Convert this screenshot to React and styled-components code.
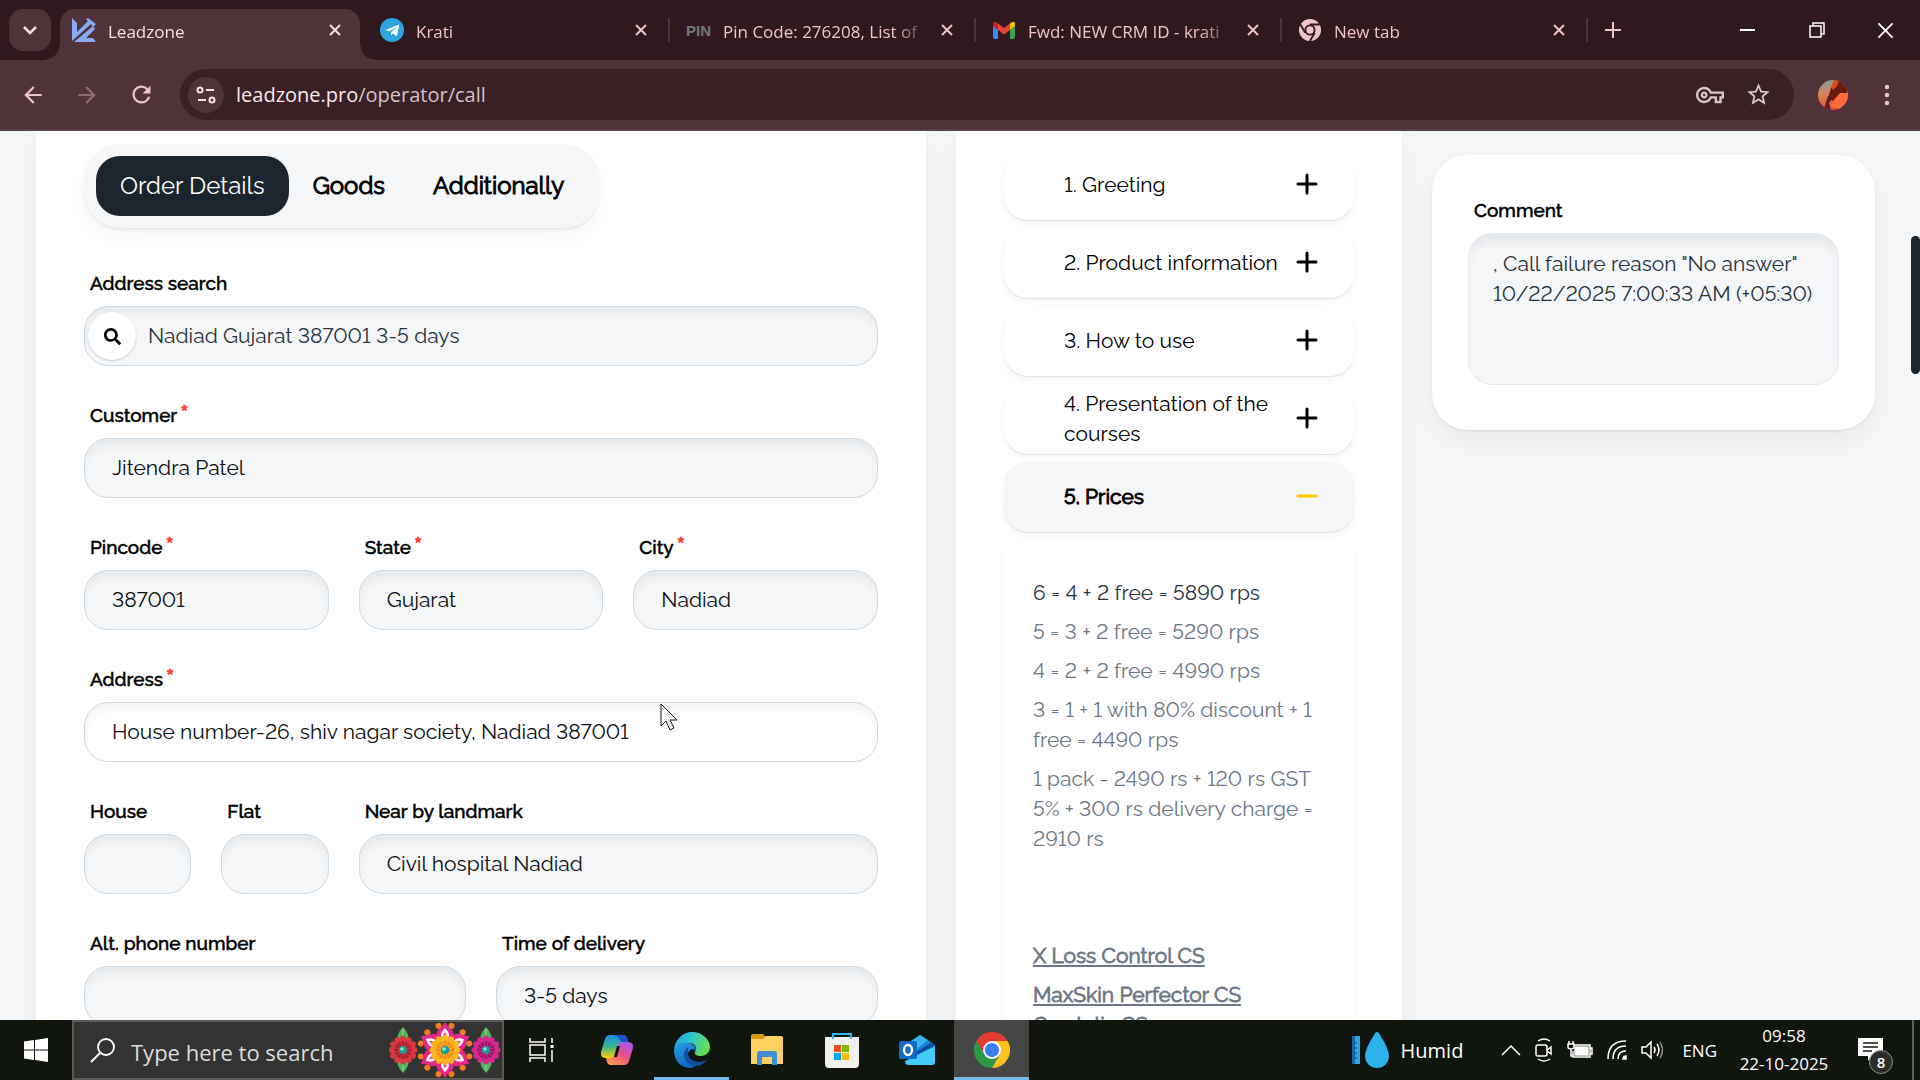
import React from "react";
import styled, { createGlobalStyle } from "styled-components";
import { FaSearch, FaTelegramPlane } from "react-icons/fa";
import {
  MdArrowBack,
  MdArrowForward,
  MdRefresh,
  MdStarBorder,
  MdOutlineVpnKey,
} from "react-icons/md";

const tabs = [
  { title: "Leadzone", icon: "leadzone", active: true },
  { title: "Krati", icon: "telegram" },
  { title: "Pin Code: 276208, List of", icon: "pin" },
  { title: "Fwd: NEW CRM ID - krati", icon: "gmail" },
  { title: "New tab", icon: "chrome" },
];

const fields = [
  { id: "search", label: "Address search", value: "Nadiad Gujarat 387001 3-5 days", span: 12, search: true },
  { id: "customer", label: "Customer", value: "Jitendra Patel", span: 12, required: true },
  { id: "pincode", label: "Pincode", value: "387001", span: 4, required: true },
  { id: "state", label: "State", value: "Gujarat", span: 4, required: true },
  { id: "city", label: "City", value: "Nadiad", span: 4, required: true },
  { id: "address", label: "Address", value: "House number-26, shiv nagar society, Nadiad 387001", span: 12, required: true, focused: true },
  { id: "house", label: "House", value: "", span: 2 },
  { id: "flat", label: "Flat", value: "", span: 2 },
  { id: "landmark", label: "Near by landmark", value: "Civil hospital Nadiad", span: 8 },
  { id: "phone", label: "Alt. phone number", value: "", span: 6 },
  { id: "delivery", label: "Time of delivery", value: "3-5 days", span: 6 },
];

const script = [
  { title: "1. Greeting" },
  { title: "2. Product information" },
  { title: "3. How to use" },
  { title: "4. Presentation of the courses" },
  { title: "5. Prices", open: true },
];

const prices = [
  "5 = 3 + 2 free = 5290 rps",
  "4 = 2 + 2 free = 4990 rps",
  "3 = 1 + 1 with 80% discount + 1 free = 4490 rps",
  "1 pack - 2490 rs + 120 rs GST 5% + 300 rs delivery charge = 2910 rs",
];

/* ---------- icons ---------- */

const ChromeLogo = ({ size, mono }) => {
  const [red, green, yellow, blue, ring] = mono
    ? ["#efc3ca", "#efc3ca", "#efc3ca", "#efc3ca", "#30191e"]
    : ["#e33b2e", "#2b9a47", "#fcc31e", "#3b7ded", "#ffffff"];
  return (
    <svg width={size} height={size} viewBox="0 0 48 48" aria-hidden="true">
      <path d="M24 12h20.800A24 24 0 0 0 3.200 12L13.600 30Z" fill={red} />
      <path d="M34.400 30 24 48A24 24 0 0 1 3.200 12L13.600 30Z" fill={green} />
      <path d="M24 12h20.800A24 24 0 0 1 24 48L34.400 30Z" fill={yellow} />
      {mono && (
        <path d="M24 12h21M13.600 30 3 12M34.400 30 24 48" stroke={ring} strokeWidth="4" />
      )}
      <circle cx="24" cy="24" r="12" fill={ring} />
      <circle cx="24" cy="24" r={mono ? 8 : 9.500} fill={blue} />
    </svg>
  );
};

const LeadzoneLogo = () => (
  <svg width="24" height="24" viewBox="0 0 24 24" fill="#86abfb" aria-hidden="true">
    <path d="M0 0 5 5v9L16 3l-2-2 2-1 8 6-3 3-2-3L0 23Z" />
    <path d="M2 24 21 8l2 3-9 9h7l3 4Z" />
  </svg>
);

const GmailLogo = () => (
  <svg width="24" height="24" viewBox="0 0 24 24" aria-hidden="true">
    <path d="M1 7v12a2 2 0 0 0 2 2h3V10Z" fill="#4285f4" />
    <path d="M23 7v12a2 2 0 0 1-2 2h-3V10Z" fill="#34a853" />
    <path d="M18 5.500 20 4a2 2 0 0 1 3 2v2l-5 4Z" fill="#fbbc04" />
    <path d="M6 5.500 4 4a2 2 0 0 0-3 2v2l5 4Z" fill="#c5221f" />
    <path d="M6 5.500 12 10l6-4.500V12l-6 4.500L6 12Z" fill="#ea4335" />
  </svg>
);

const TabIcon = ({ name }) => {
  if (name === "leadzone") return <LeadzoneLogo />;
  if (name === "telegram")
    return (
      <TelegramBadge>
        <FaTelegramPlane size={15} />
      </TelegramBadge>
    );
  if (name === "pin") return <PinBadge>PIN</PinBadge>;
  if (name === "gmail") return <GmailLogo />;
  return <ChromeLogo size={22} mono />;
};

const CloseIcon = ({ size = 12, width = 2 }) => (
  <svg width={size} height={size} viewBox="0 0 12 12" fill="none" stroke="currentColor" strokeWidth={width}>
    <path d="M1 1l10 10M11 1 1 11" />
  </svg>
);

const SiteIcon = () => (
  <svg width="20" height="20" viewBox="0 0 20 20" fill="none" stroke="currentColor" strokeWidth="2">
    <circle cx="4" cy="5" r="2.500" />
    <path d="M10 5h8M2 15h8" />
    <circle cx="16" cy="15" r="2.500" />
  </svg>
);

const Avatar = () => (
  <svg width="30" height="30" viewBox="0 0 30 30" aria-hidden="true">
    <defs>
      <clipPath id="avatar">
        <circle cx="15" cy="15" r="15" />
      </clipPath>
      <linearGradient id="sunset" x1="0" y1="0" x2="0" y2="1">
        <stop offset="0" stopColor="#8d9a94" />
        <stop offset="0.500" stopColor="#d98556" />
        <stop offset="1" stopColor="#f0452a" />
      </linearGradient>
    </defs>
    <g clipPath="url(#avatar)">
      <rect width="30" height="30" fill="url(#sunset)" />
      <path d="m17 13 11-1 2 8-8 9-9-2Z" fill="#ff6a3a" />
      <path d="M13 8 18 0h6l6 9-1 4-7 0-7 8-5-3Z" fill="#6b1c10" />
      <path d="M13 7 16 0h5l-2 6-4 4Z" fill="#e2491c" />
      <path d="m10 16 5 2-4 5 2 7H6l2-8Z" fill="#54202a" />
    </g>
  </svg>
);

const Cursor = () => (
  <svg width="18" height="28" viewBox="0 0 18 28" aria-hidden="true">
    <path d="M1 1v22l5-5 4 9 4-2-4-8h7Z" fill="#fff" stroke="#111" strokeWidth="1" />
  </svg>
);

const WindowsLogo = () => (
  <svg width="24" height="24" viewBox="0 0 24 24" fill="#fff" aria-hidden="true">
    <path d="M0 3.400 10 2v9.500H0ZM11 1.900 24 0v11.500H11ZM0 12.500h10V22L0 20.600ZM11 12.500h13V24l-13-1.900Z" />
  </svg>
);

const Flower = ({ x, y, r, petal, center }) => (
  <g transform={`translate(${x} ${y})`}>
    {Array.from({ length: 12 }, (_, i) => (
      <ellipse key={i} cx="0" cy={-r * 0.7} rx={r * 0.23} ry={r * 0.34} fill={petal} transform={`rotate(${i * 30})`} />
    ))}
    <circle r={r * 0.62} fill={center} />
    {Array.from({ length: 12 }, (_, i) => (
      <path key={i} d={`M0 0V${-r * 0.75}`} stroke={petal} strokeWidth="1" transform={`rotate(${i * 30 + 15})`} />
    ))}
    <circle r={r * 0.28} fill="#1b9e92" />
    <circle cx="-1" cy="-1" r={r * 0.12} fill="#8be8dc" />
  </g>
);

const Flowers = () => (
  <svg width="112" height="56" viewBox="0 0 112 56" aria-hidden="true">
    {[14, 97].map((x) => (
      <g key={x} fill="#4fb45c">
        <path d={`M${x} 5q8 8 5 17h-10q-3-9 5-17Z`} />
        <path d={`M${x} 51q8-8 5-17h-10q-3 9 5 17Z`} />
        <path d={`M${x} 7v42`} stroke="#9be08b" />
      </g>
    ))}
    <g transform="translate(56 28)">
      {Array.from({ length: 12 }, (_, i) => (
        <g key={i} transform={`rotate(${i * 30 + 15})`}>
          <path d="M0-23 4-12H-4Z" fill="#178c80" />
          <circle cx="0" cy="-25" r="3" fill="#f47b20" />
        </g>
      ))}
      {Array.from({ length: 6 }, (_, i) => (
        <g key={i} transform={`rotate(${i * 60})`}>
          <path d="M0-28q3 5 7 8 3 4 1 10H-8q-2-6 1-10 4-3 7-8Z" fill="#e5268b" />
          <path d="M0-22q6 6 3 10h-6q-3-4 3-10Z" fill="#fff" />
          <path d="M0-18q3 4 1 6h-2q-2-2 1-6Z" fill="#e5268b" />
        </g>
      ))}
    </g>
    <Flower x={14} y={28} r={14} petal="#d8383f" center="#a81f30" />
    <Flower x={97} y={28} r={14} petal="#d42a8c" center="#96156a" />
    <Flower x={56} y={28} r={15} petal="#fbb61c" center="#f58a1f" />
  </svg>
);

const TaskViewIcon = () => (
  <svg width="26" height="24" viewBox="0 0 26 24" fill="none" stroke="#fff" strokeWidth="1.500" aria-hidden="true">
    <path d="M1 0v4h15V0M1 24v-4h15v4M1 7h15v10H1ZM23 0v5M23 12v12" />
    <path d="M21.500 7h3v3h-3Z" fill="#fff" stroke="none" />
  </svg>
);

const CopilotIcon = () => (
  <svg width="34" height="32" viewBox="0 0 34 32" aria-hidden="true">
    <defs>
      <linearGradient id="cpa" x1="0" y1="0" x2="0" y2="1">
        <stop offset="0" stopColor="#1a8ff0" />
        <stop offset="0.500" stopColor="#35b68d" />
        <stop offset="1" stopColor="#ffd000" />
      </linearGradient>
      <linearGradient id="cpb" x1="0.800" y1="0" x2="0.200" y2="1">
        <stop offset="0" stopColor="#a05af0" />
        <stop offset="0.500" stopColor="#ec4f86" />
        <stop offset="1" stopColor="#ff9a4c" />
      </linearGradient>
    </defs>
    <path d="M23 1h1q2 0 3 3l1 4h-5q-3 0-4 4l-3 9q-1 3-5 3H6q-6 0-5-6L5 5q1-4 5-4Z" fill="url(#cpa)" />
    <path d="M11 31h-1q-2 0-3-3l-1-4h5q3 0 4-4l3-9q1-3 5-3h5q6 0 5 6l-4 13q-1 4-5 4Z" fill="url(#cpb)" />
    <path d="M10 1h14q2 0 3 3l1 4h-5q-2 0-3-2-2-5-10-5Z" fill="#1c50c8" />
    <path d="m17 12-3 11h3l3-11Z" fill="#10130e" />
  </svg>
);

const EdgeIcon = () => (
  <svg width="36" height="36" viewBox="0 0 36 36" aria-hidden="true">
    <defs>
      <linearGradient id="eda" x1="0" y1="0" x2="1" y2="0.300">
        <stop offset="0" stopColor="#1f9ad8" />
        <stop offset="0.500" stopColor="#2fc5d0" />
        <stop offset="1" stopColor="#62dd58" />
      </linearGradient>
      <linearGradient id="edb" x1="0" y1="0" x2="0.600" y2="1">
        <stop offset="0" stopColor="#2aa0e4" />
        <stop offset="1" stopColor="#0b63c4" />
      </linearGradient>
    </defs>
    <path d="M0 18C1 7 9 0 18 0c11 0 18 8 18 15 0 6-5 9-9 9-5 0-7-2-6-4 3-4 0-9-7-9C7 11 2 14 0 18Z" fill="url(#eda)" />
    <path d="M0 18c1-5 7-8 13-7 6 0 9 4 9 8-2-3-8-2-8 4 0 6 6 9 11 8-3 4-7 5-10 5C5 35 0 27 0 18Z" fill="url(#edb)" />
    <path d="M14 15c-6 4-5 13 1 17 6 4 14 2 18-4-8 4-18 1-19-6-.500-3 0-5 0-7Z" fill="#124f9c" />
  </svg>
);

const ExplorerIcon = () => (
  <svg width="32" height="32" viewBox="0 0 32 32" aria-hidden="true">
    <path d="M0 2q0-2 2-2h10l3 3v4H0Z" fill="#d99a0b" />
    <path d="M0 5h12l3-3h15q2 0 2 2v26H0Z" fill="#fdd164" />
    <path d="M6 31V20q0-3 3-3h14q3 0 3 3v11h-5v-8H11v8Z" fill="#3b8fd6" />
  </svg>
);

const StoreIcon = () => (
  <svg width="36" height="36" viewBox="0 0 36 36" aria-hidden="true">
    <path d="M9 8V2h18v6" fill="none" stroke="#30b6ee" strokeWidth="2" />
    <path d="M1 5h34v27q0 4-4 4H5q-4 0-4-4Z" fill="#f1f1f1" />
    <path d="M9 7V5M27 7V5" stroke="#30b6ee" strokeWidth="2" />
    <path d="M10 13h7v7h-7Z" fill="#f25022" />
    <path d="M18 13h7v7h-7Z" fill="#7fba00" />
    <path d="M10 21h7v7h-7Z" fill="#00a4ef" />
    <path d="M18 21h7v7h-7Z" fill="#ffb900" />
  </svg>
);

const OutlookIcon = () => (
  <svg width="36" height="30" viewBox="0 0 36 30" aria-hidden="true">
    <path d="M6 10 21 0l15 10v8H6Z" fill="#1a84d8" />
    <path d="m12 6 9-6 8 5-15 12Z" fill="#36b4ee" />
    <path d="M17 17 33 7l3 3v5L17 26Z" fill="#0a4ca8" />
    <path d="M6 26 36 11v16q0 3-3 3H10q-4 0-4-4Z" fill="#42cdf8" />
    <rect y="6" width="18" height="18" rx="2" fill="#0f6cc8" />
    <ellipse cx="9" cy="15" rx="4" ry="5" fill="none" stroke="#fff" strokeWidth="2.500" />
  </svg>
);

const HumidIcon = () => (
  <svg width="38" height="36" viewBox="0 0 38 36" aria-hidden="true">
    <rect y="4" width="8" height="28" fill="#2ba6e4" />
    <path d="M0 4h3v28H0Z" fill="#1468b0" />
    <path d="M2 11h3M2 16h3M2 21h3M2 26h3" stroke="#0d3f78" />
    <path d="M25 0q2 0 3 3 9 14 9 21a12 12 0 0 1-24 0q0-7 9-21 1-3 3-3Z" fill="#2db2ee" />
  </svg>
);

const TrayIcons = () => (
  <TrayGroup>
    <svg width="20" height="12" viewBox="0 0 20 12"><path d="m1 11 9-9 9 9" /></svg>
    <svg width="18" height="24" viewBox="0 0 18 24">
      <path d="M3 3q6-4 12 0M3 21q6 4 12 0" />
      <rect x="1" y="7" width="11" height="11" rx="2" />
      <path d="m12 12 4-3v7l-4-3" />
    </svg>
    <svg width="26" height="20" viewBox="0 0 26 20">
      <path d="M7 5h16v12H6v-6M23 8h2v6h-2" />
      <path d="M8 7h13v8H8Z" fill="#fff" />
      <path d="M1 4h6v3q0 2-3 2t-3-2ZM2 4V1M6 4V1M4 9v7h2" />
    </svg>
    <svg width="20" height="20" viewBox="0 0 20 20">
      <path d="M1 19Q1 1 19 1M6 19Q6 6 19 6M11 19q0-8 8-8" />
      <path d="M16 19q0-3 3-3v3Z" fill="#fff" />
    </svg>
    <svg width="24" height="20" viewBox="0 0 24 20">
      <path d="M1 7h4l5-5v16l-5-5H1ZM13 7q2 3 0 6M16 4q4 6 0 12" />
      <path d="M19 2q5 8 0 16" opacity="0.500" />
    </svg>
  </TrayGroup>
);

const NotificationIcon = () => (
  <svg width="26" height="24" viewBox="0 0 26 24" aria-hidden="true">
    <path d="M0 0h25v18H14l-4 5v-5H0Z" fill="#fff" />
    <path d="M5 5h15M5 9h15M5 13h9" stroke="#14190f" strokeWidth="1.500" />
  </svg>
);

/* ---------- browser ---------- */

const BrowserChrome = () => (
  <header>
    <TabStrip>
      <TabSearch aria-label="Search tabs">
        <svg width="14" height="9" viewBox="0 0 14 9" fill="none" stroke="currentColor" strokeWidth="2.500">
          <path d="m1 1 6 6 6-6" />
        </svg>
      </TabSearch>
      {tabs.map((tab) => (
        <React.Fragment key={tab.title}>
          <Tab $active={tab.active}>
            <TabIconBox>
              <TabIcon name={tab.icon} />
            </TabIconBox>
            <TabTitle>{tab.title}</TabTitle>
            <PlainButton aria-label={`Close ${tab.title}`}>
              <CloseIcon />
            </PlainButton>
          </Tab>
          <TabDivider $hidden={tab.active} />
        </React.Fragment>
      ))}
      <NewTab aria-label="Open new tab">
        <svg width="16" height="16" viewBox="0 0 16 16" stroke="currentColor" strokeWidth="2">
          <path d="M8 0v16M0 8h16" />
        </svg>
      </NewTab>
      <WindowControls>
        <WindowButton aria-label="Minimize">
          <svg width="15" height="15" viewBox="0 0 15 15" stroke="#fff" strokeWidth="2"><path d="M0 7h15" /></svg>
        </WindowButton>
        <WindowButton aria-label="Restore">
          <svg width="16" height="16" viewBox="0 0 16 16" fill="none" stroke="#fff" strokeWidth="1.500">
            <path d="M1 4h11v11H1ZM4 4V1h11v11h-3" />
          </svg>
        </WindowButton>
        <WindowButton aria-label="Close window">
          <CloseIcon size={17} width={1.3} />
        </WindowButton>
      </WindowControls>
    </TabStrip>
    <Toolbar>
      <ToolButton aria-label="Back"><MdArrowBack size={26} /></ToolButton>
      <ToolButton aria-label="Forward" $dim><MdArrowForward size={26} /></ToolButton>
      <ToolButton aria-label="Reload"><MdRefresh size={27} /></ToolButton>
      <Omnibox>
        <SiteButton aria-label="Site information"><SiteIcon /></SiteButton>
        <Url>
          leadzone.pro<span>/operator/call</span>
        </Url>
        <OmniboxActions>
          <PlainButton aria-label="Passwords"><MdOutlineVpnKey size={28} /></PlainButton>
          <PlainButton aria-label="Bookmark"><MdStarBorder size={27} /></PlainButton>
        </OmniboxActions>
      </Omnibox>
      <ProfileButton aria-label="Profile"><Avatar /></ProfileButton>
      <ToolButton aria-label="Menu">
        <svg width="6" height="22" viewBox="0 0 6 22" fill="currentColor">
          <circle cx="3" cy="3" r="2.200" />
          <circle cx="3" cy="11" r="2.200" />
          <circle cx="3" cy="19" r="2.200" />
        </svg>
      </ToolButton>
    </Toolbar>
  </header>
);

/* ---------- page ---------- */

const OrderForm = () => (
  <OrderCard>
    <FormTabs>
      <FormTab $active>Order Details</FormTab>
      <FormTab>Goods</FormTab>
      <FormTab>Additionally</FormTab>
    </FormTabs>
    <FieldGrid>
      {fields.map((field) => (
        <Field key={field.id} $span={field.span}>
          <Label htmlFor={field.id}>
            {field.label}
            {field.required && <Required>*</Required>}
          </Label>
          <InputWrap>
            {field.search && (
              <SearchButton aria-label="Search address"><FaSearch size={17} /></SearchButton>
            )}
            <Input id={field.id} defaultValue={field.value} $search={field.search} $focused={field.focused} />
            {field.focused && <Pointer><Cursor /></Pointer>}
          </InputWrap>
        </Field>
      ))}
    </FieldGrid>
  </OrderCard>
);

const ScriptPanel = () => (
  <ScriptCard>
    {script.map((item) => (
      <AccordionButton key={item.title} $open={item.open} aria-expanded={!!item.open}>
        <span>{item.title}</span>
        <svg width="22" height="24" viewBox="0 0 22 24" fill="none" stroke={item.open ? "#ffc700" : "#000"} strokeWidth="3" strokeLinecap="round">
          <path d={item.open ? "M2 11h18" : "M11 2v18M2 11h18"} />
        </svg>
      </AccordionButton>
    ))}
    <AccordionBody>
      <Price $dark>6 = 4 + 2 free = 5890 rps</Price>
      {prices.map((price) => (
        <Price key={price}>{price}</Price>
      ))}
      <Price>&nbsp;</Price>
      <Price>&nbsp;</Price>
      <Course>X Loss Control CS</Course>
      <Course>
        MaxSkin Perfector CS
        <br />
        Crystalix CS
      </Course>
    </AccordionBody>
  </ScriptCard>
);

const CommentPanel = () => (
  <CommentCard>
    <Label htmlFor="comment">Comment</Label>
    <Comment
      id="comment"
      defaultValue={', Call failure reason "No answer"\n10/22/2025 7:00:33 AM (+05:30)'}
    />
  </CommentCard>
);

const Taskbar = () => (
  <TaskbarRow>
    <StartButton aria-label="Start"><WindowsLogo /></StartButton>
    <TaskSearch>
      <svg width="25" height="25" viewBox="0 0 25 25" fill="none" stroke="#fff" strokeWidth="1.800">
        <circle cx="16" cy="9" r="8" />
        <path d="M10 15 1 24" />
      </svg>
      <TaskSearchInput aria-label="Type here to search" placeholder="Type here to search" />
      <Flowers />
    </TaskSearch>
    <TaskButton aria-label="Task view"><TaskViewIcon /></TaskButton>
    <TaskButton aria-label="Copilot"><CopilotIcon /></TaskButton>
    <TaskButton aria-label="Edge" $running><EdgeIcon /></TaskButton>
    <TaskButton aria-label="File Explorer"><ExplorerIcon /></TaskButton>
    <TaskButton aria-label="Store"><StoreIcon /></TaskButton>
    <TaskButton aria-label="Outlook"><OutlookIcon /></TaskButton>
    <TaskButton aria-label="Chrome" $current><ChromeLogo size={36} /></TaskButton>
    <Tray>
      <Weather>
        <HumidIcon />
        Humid
      </Weather>
      <TrayIcons />
      <Language>ENG</Language>
      <Clock>
        <span>09:58</span>
        <span>22-10-2025</span>
      </Clock>
      <Notifications aria-label="Notifications">
        <NotificationIcon />
        <Badge>8</Badge>
      </Notifications>
      <ShowDesktop />
    </Tray>
  </TaskbarRow>
);

export default function App() {
  return (
    <Screen>
      <GlobalStyle />
      <BrowserChrome />
      <Page>
        <OrderForm />
        <ScriptPanel />
        <CommentPanel />
        <ScrollThumb />
      </Page>
      <Taskbar />
    </Screen>
  );
}

/* ---------- styles ---------- */

const GlobalStyle = createGlobalStyle`
  * {
    box-sizing: border-box;
  }
  body {
    margin: 0;
    overflow: hidden;
  }
  button, input, textarea {
    font: inherit;
    color: inherit;
  }
  button {
    padding: 0;
    border: 0;
    background: none;
  }
`;

const Screen = styled.div`
  display: flex;
  flex-direction: column;
  height: 100vh;
  font-family: "Open Sans", sans-serif;
`;

const TabStrip = styled.div`
  display: flex;
  align-items: center;
  height: 60px;
  padding-left: 9px;
  background: #30191e;
  color: #efc3ca;
`;

const PlainButton = styled.button`
  display: flex;
  align-items: center;
  justify-content: center;
`;

const TabSearch = styled(PlainButton)`
  width: 42px;
  height: 42px;
  margin-right: 9px;
  border-radius: 14px;
  background: #503338;
  color: #f8dfe2;
`;

const Tab = styled.div`
  position: relative;
  display: flex;
  align-items: center;
  gap: 12px;
  flex: 0 1 300px;
  min-width: 0;
  height: 51px;
  align-self: flex-end;
  padding: 0 19px 9px ${(props) => (props.$active ? "12px" : "14px")};
  border-radius: 15px 15px 0 0;
  background: ${(props) => (props.$active ? "#503338" : "transparent")};
  color: ${(props) => (props.$active ? "#f8dfe2" : "inherit")};

  &::before,
  &::after {
    content: ${(props) => (props.$active ? '""' : "none")};
    position: absolute;
    bottom: 0;
    width: 15px;
    height: 15px;
  }
  &::before {
    right: 100%;
    background: radial-gradient(circle at 0 0, transparent 14px, #503338 15px);
  }
  &::after {
    left: 100%;
    background: radial-gradient(circle at 100% 0, transparent 14px, #503338 15px);
  }
`;

const TabIconBox = styled.span`
  display: flex;
  justify-content: center;
  flex: 0 0 24px;
`;

const TelegramBadge = styled.span`
  display: flex;
  align-items: center;
  justify-content: center;
  width: 24px;
  height: 24px;
  border-radius: 50%;
  background: #2da5e0;
  color: #fff;
`;

const PinBadge = styled.span`
  font: bold 15px "Liberation Sans", sans-serif;
  color: #73777b;
`;

const TabTitle = styled.span`
  flex: 1;
  min-width: 0;
  padding-top: 3px;
  overflow: hidden;
  white-space: nowrap;
  font-size: 17px;
  line-height: 26px;
  mask-image: linear-gradient(to right, #000 calc(100% - 36px), transparent);
`;

const TabDivider = styled.span`
  flex: 0 0 2px;
  height: 24px;
  margin: 0 2px;
  border-radius: 1px;
  background: ${(props) => (props.$hidden ? "transparent" : "#503338")};
`;

const NewTab = styled(PlainButton)`
  width: 46px;
  height: 42px;
`;

const WindowControls = styled.div`
  display: flex;
  margin-left: auto;
  color: #fff;
`;

const WindowButton = styled(PlainButton)`
  width: 69px;
  height: 60px;
`;

const Toolbar = styled.div`
  display: flex;
  align-items: center;
  height: 71px;
  padding: 0 6px;
  border-bottom: 2px solid #57454a;
  background: #503338;
  color: #efc3ca;
`;

const ToolButton = styled(PlainButton)`
  width: 54px;
  height: 54px;
  opacity: ${(props) => (props.$dim ? 0.4 : 1)};
`;

const Omnibox = styled.div`
  display: flex;
  align-items: center;
  flex: 1;
  height: 51px;
  margin: 0 12px;
  padding: 0 22px 0 8px;
  border-radius: 26px;
  background: #382025;
`;

const SiteButton = styled(PlainButton)`
  width: 36px;
  height: 36px;
  border-radius: 50%;
  background: #503338;
  color: #f8dfe2;
`;

const Url = styled.div`
  flex: 1;
  margin-left: 12px;
  font-size: 20px;
  line-height: 28px;
  color: #f9e9eb;

  span {
    color: #d5c3c6;
  }
`;

const OmniboxActions = styled.div`
  display: flex;
  gap: 21px;
  color: #d9c6c8;
`;

const ProfileButton = styled(PlainButton)`
  width: 54px;
  height: 54px;
`;

const Page = styled.main`
  position: relative;
  display: grid;
  grid-template-columns: 890fr 446fr 443fr;
  gap: 30px;
  flex: 1;
  min-height: 0;
  padding: 0 45px 0 36px;
  overflow: hidden;
  background: #f5f6f8;
  font-family: Raleway, Lato, sans-serif;
  font-variant-numeric: lining-nums;
  font-size: 21px;
  line-height: 30px;
  color: #000;

  button, input, textarea {
    font-variant-numeric: lining-nums;
  }
`;

const Card = styled.section`
  background: #fff;
  box-shadow: 0 12px 28px rgba(0, 0, 0, 0.05);
`;

const OrderCard = styled(Card)`
  padding: 13px 48px 0;
`;

const FormTabs = styled.div`
  display: inline-flex;
  padding: 12px;
  margin-bottom: 40px;
  border-radius: 36px;
  background: #f5f6f8;
  box-shadow: 0 2px 2px rgba(0, 0, 0, 0.06), 0 10px 20px rgba(0, 0, 0, 0.04);
`;

const FormTab = styled.button`
  height: 60px;
  padding: 0 24px;
  border-radius: 24px;
  font-size: 24px;
  font-weight: 400;
  -webkit-text-stroke: ${(props) => (props.$active ? "0" : "1px currentColor")};
  background: ${(props) => (props.$active ? "#1b252d" : "transparent")};
  color: ${(props) => (props.$active ? "#fff" : "#000")};
`;

const FieldGrid = styled.div`
  display: grid;
  grid-template-columns: repeat(12, 1fr);
  gap: 34px 30px;
`;

const Field = styled.div`
  grid-column: span ${(props) => props.$span};
  min-width: 0;
`;

const Label = styled.label`
  display: block;
  height: 30px;
  margin-bottom: 8px;
  padding-left: 6px;
  font-size: 19px;
  font-weight: 500;
  line-height: 31px;
  -webkit-text-stroke: 0.5px currentColor;
  white-space: nowrap;
`;

const Required = styled.sup`
  margin-left: 3px;
  font-size: 24px;
  font-weight: 700;
  line-height: 0;
  vertical-align: 0;
  color: #ff3b30;
`;

const InputWrap = styled.div`
  position: relative;
`;

const Input = styled.input`
  display: block;
  width: 100%;
  height: 60px;
  padding: 0 27px 2px ${(props) => (props.$search ? "63px" : "27px")};
  border: 1px solid #cbd9e4;
  border-radius: 24px;
  outline: none;
  background: ${(props) => (props.$focused ? "#fff" : "#f5f6f8")};
  box-shadow: inset 0 8px 8px -2px
    ${(props) => (props.$focused ? "rgba(27, 50, 45, 0.06)" : "rgba(27, 50, 60, 0.07)")};
  color: ${(props) => (props.$search ? "#27323b" : "#0a0d10")};
`;

const SearchButton = styled(PlainButton)`
  position: absolute;
  top: 6px;
  left: 4px;
  width: 48px;
  height: 48px;
  border-radius: 24px;
  background: #fff;
  box-shadow: 0 1px 2px #b9cbd8;
`;

const Pointer = styled.div`
  position: absolute;
  top: 1px;
  left: 576px;
  line-height: 0;
`;

const ScriptCard = styled(Card)`
  display: flex;
  flex-direction: column;
  gap: 8px;
  padding: 19px 48px 0;
`;

const AccordionButton = styled.button`
  display: flex;
  align-items: center;
  justify-content: space-between;
  gap: 12px;
  flex: 0 0 70px;
  padding: 0 36px 0 60px;
  border-radius: 24px;
  text-align: left;
  font-weight: 400;
  -webkit-text-stroke: ${(props) => (props.$open ? "1px currentColor" : "0")};
  background: ${(props) => (props.$open ? "#f5f6f8" : "#fff")};
  box-shadow: 0 1px 1px #dbe3ea, 0 4px 10px rgba(0, 0, 0, 0.04);

  svg {
    flex: none;
  }
`;

const AccordionBody = styled.div`
  flex: 1 0 auto;
  margin-top: -8px;
  padding: 46px 29px 0;
  box-shadow: 0 16px 12px rgba(0, 0, 0, 0.03);
`;

const Price = styled.p`
  margin: 0 0 9px;
  color: ${(props) => (props.$dark ? "#27323b" : "#6d7685")};
`;

const Course = styled(Price)`
  -webkit-text-stroke: 0.8px currentColor;
  text-decoration: underline;
`;

const CommentCard = styled(Card)`
  align-self: start;
  margin-top: 24px;
  padding: 40px 36px 45px;
  border-radius: 36px;
  box-shadow: 0 1px 2px rgba(0, 0, 0, 0.08), 0 12px 28px rgba(0, 0, 0, 0.05);
`;

const Comment = styled.textarea`
  display: block;
  width: 100%;
  height: 152px;
  padding: 15px 12px 15px 24px;
  border: 1px solid #e4eaf0;
  border-radius: 24px;
  outline: none;
  resize: none;
  overflow: hidden;
  background: #f5f6f8;
  box-shadow: inset 0 10px 8px -2px rgba(27, 50, 60, 0.07);
  line-height: 30px;
  color: #27323b;
`;

const ScrollThumb = styled.div`
  position: absolute;
  top: 105px;
  right: 0;
  width: 9px;
  height: 138px;
  border-radius: 5px;
  background: #1b252d;
`;

const TaskbarRow = styled.footer`
  display: flex;
  height: 60px;
  background: #10150d;
  color: #fff;
`;

const StartButton = styled(PlainButton)`
  width: 72px;
`;

const TaskSearch = styled.div`
  display: flex;
  align-items: center;
  width: 432px;
  padding: 0 1px 0 16px;
  border: 2px solid #5b5b5b;
  background: #333;
`;

const TaskSearchInput = styled.input`
  flex: 1;
  min-width: 0;
  padding: 3px 0 0 16px;
  border: 0;
  outline: none;
  background: none;
  font-size: 22px;

  &::placeholder {
    color: #dcdcdc;
    opacity: 1;
  }
`;

const TaskButton = styled(PlainButton)`
  width: 75px;
  padding-top: 3px;
  border-bottom: 3px solid ${(props) => (props.$running || props.$current ? "#76b9ed" : "transparent")};
  background: ${(props) => (props.$current ? "#464646" : "transparent")};
`;

const Tray = styled.div`
  display: flex;
  align-items: center;
  margin-left: auto;
`;

const Weather = styled.div`
  display: flex;
  align-items: center;
  gap: 11px;
  margin-right: 38px;
  font-size: 20px;
`;

const TrayGroup = styled.div`
  display: flex;
  align-items: center;
  gap: 14px;

  svg {
    fill: none;
    stroke: #fff;
    stroke-width: 1.5;
  }
`;

const Language = styled.span`
  margin: 0 20px 0 17px;
  font-size: 17px;
`;

const Clock = styled.div`
  display: flex;
  flex-direction: column;
  align-items: center;
  width: 94px;
  font-size: 17px;
  line-height: 28px;
`;

const Notifications = styled(PlainButton)`
  position: relative;
  margin: 0 28px 0 27px;
`;

const Badge = styled.span`
  position: absolute;
  top: 12px;
  left: 11px;
  width: 24px;
  height: 24px;
  border: 1px solid #8d8d8d;
  border-radius: 50%;
  background: #2b2d2a;
  font-size: 15px;
  font-weight: 600;
  line-height: 22px;
  text-align: center;
`;

const ShowDesktop = styled.span`
  width: 8px;
  height: 60px;
  border-left: 2px solid #5c605a;
`;
